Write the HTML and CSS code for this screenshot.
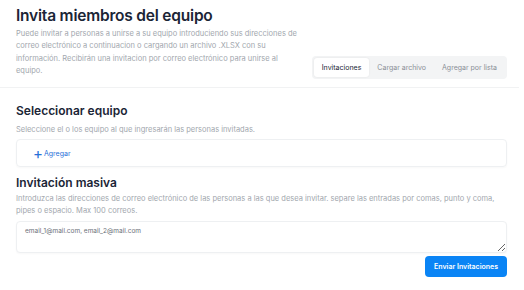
FILE: index.html
```html
<!DOCTYPE html>
<html lang="es">
<head>
    <meta charset="UTF-8">
    <meta name="viewport" content="width=device-width, initial-scale=1.0">
    <title>Invita miembros del equipo</title>
    <link rel="stylesheet" href="styles.css">
</head>
<body>
    <div class="page">
        <div class="header">
            <div class="intro">
                <h1>Invita miembros del equipo</h1>
                <p class="desc">Puede invitar a personas a unirse a su equipo introduciendo sus direcciones de correo electrónico a continuacion o cargando un archivo .XLSX con su información. Recibirán una invitacion por correo electrónico para unirse al equipo.</p>
            </div>
            <div class="tabs">
                <span class="tab active">Invitaciones</span>
                <span class="tab">Cargar archivo</span>
                <span class="tab">Agregar por lista</span>
            </div>
        </div>
        <div class="divider"></div>

        <h2 class="team">Seleccionar equipo</h2>
        <p class="desc">Seleccione el o los equipo al que ingresarán las personas invitadas.</p>
        <div class="team-box">
            <button class="add"><span class="plus">+</span>Agregar</button>
        </div>

        <h2 class="mass">Invitación masiva</h2>
        <p class="desc">Introduzca las direcciones de correo electrónico de las personas a las que desea invitar. separe las entradas por comas, punto y coma, pipes o espacio. Max 100 correos.</p>
        <textarea class="emails" placeholder="email_1@mail.com, email_2@mail.com"></textarea>
        <div class="actions">
            <button class="send">Enviar Invitaciones</button>
        </div>
    </div>
</body>
</html>
```

FILE: styles.css
```css
body {
    margin: 0;
    background: #fff;
    font-family: "Inter", "Noto Sans", sans-serif;
    color: #1b2536;
}

.page {
    padding: 6px 17px 0 16px;
}

.header {
    display: flex;
    justify-content: space-between;
    align-items: flex-end;
}

.intro {
    width: 285px;
}

h1 {
    font-size: 15.5px;
    font-weight: 600;
    margin: 0 0 3px;
    letter-spacing: -0.2px;
}

h2 {
    font-size: 12px;
    font-weight: 600;
    margin: 0 0 3px;
}

h2.team {
    margin-bottom: 6px;
}

.desc {
    font-size: 7.5px;
    line-height: 12.4px;
    color: #a2a7ae;
    margin: 0;
}

.tabs {
    display: flex;
    background: #f3f4f5;
    border-radius: 4px;
    padding: 2px;
    margin-bottom: -1px;
}

.tab {
    font-size: 7px;
    color: #8a8f96;
    padding: 5px 8px;
    border-radius: 3px;
}

.tab.active {
    background: #fff;
    color: #1b2536;
    box-shadow: 0 0 2px rgba(0, 0, 0, 0.08);
}

.divider {
    height: 1px;
    background: #f1f2f3;
    margin: 9px -12px 15px -16px;
}

.team-box {
    border: 1px solid #eef0f2;
    border-radius: 4px;
    height: 26px;
    display: flex;
    align-items: center;
    padding-left: 16px;
    margin-top: 3px;
    box-shadow: 0 1px 2px rgba(0, 0, 0, 0.03);
}

.add {
    background: none;
    border: none;
    padding: 0;
    font-family: inherit;
    font-size: 7px;
    color: #2870d8;
    display: flex;
    align-items: center;
}

.plus {
    font-size: 15px;
    font-weight: 400;
    margin-right: 1px;
    line-height: 1;
}

.mass {
    margin-top: 8px;
}

.emails {
    display: block;
    box-sizing: border-box;
    width: 100%;
    height: 32px;
    margin-top: 3px;
    border: 1px solid #eef0f2;
    border-radius: 4px;
    padding: 5px 8px;
    font-family: inherit;
    font-size: 6.5px;
    box-shadow: 0 1px 2px rgba(0, 0, 0, 0.03);
}

.emails::placeholder {
    color: #6b7078;
}

.actions {
    display: flex;
    justify-content: flex-end;
    margin-top: 3px;
}

.send {
    background: #0a84f5;
    color: #fff;
    border: none;
    border-radius: 4px;
    font-family: inherit;
    font-size: 7px;
    font-weight: 600;
    padding: 6px 9px;
}
```
